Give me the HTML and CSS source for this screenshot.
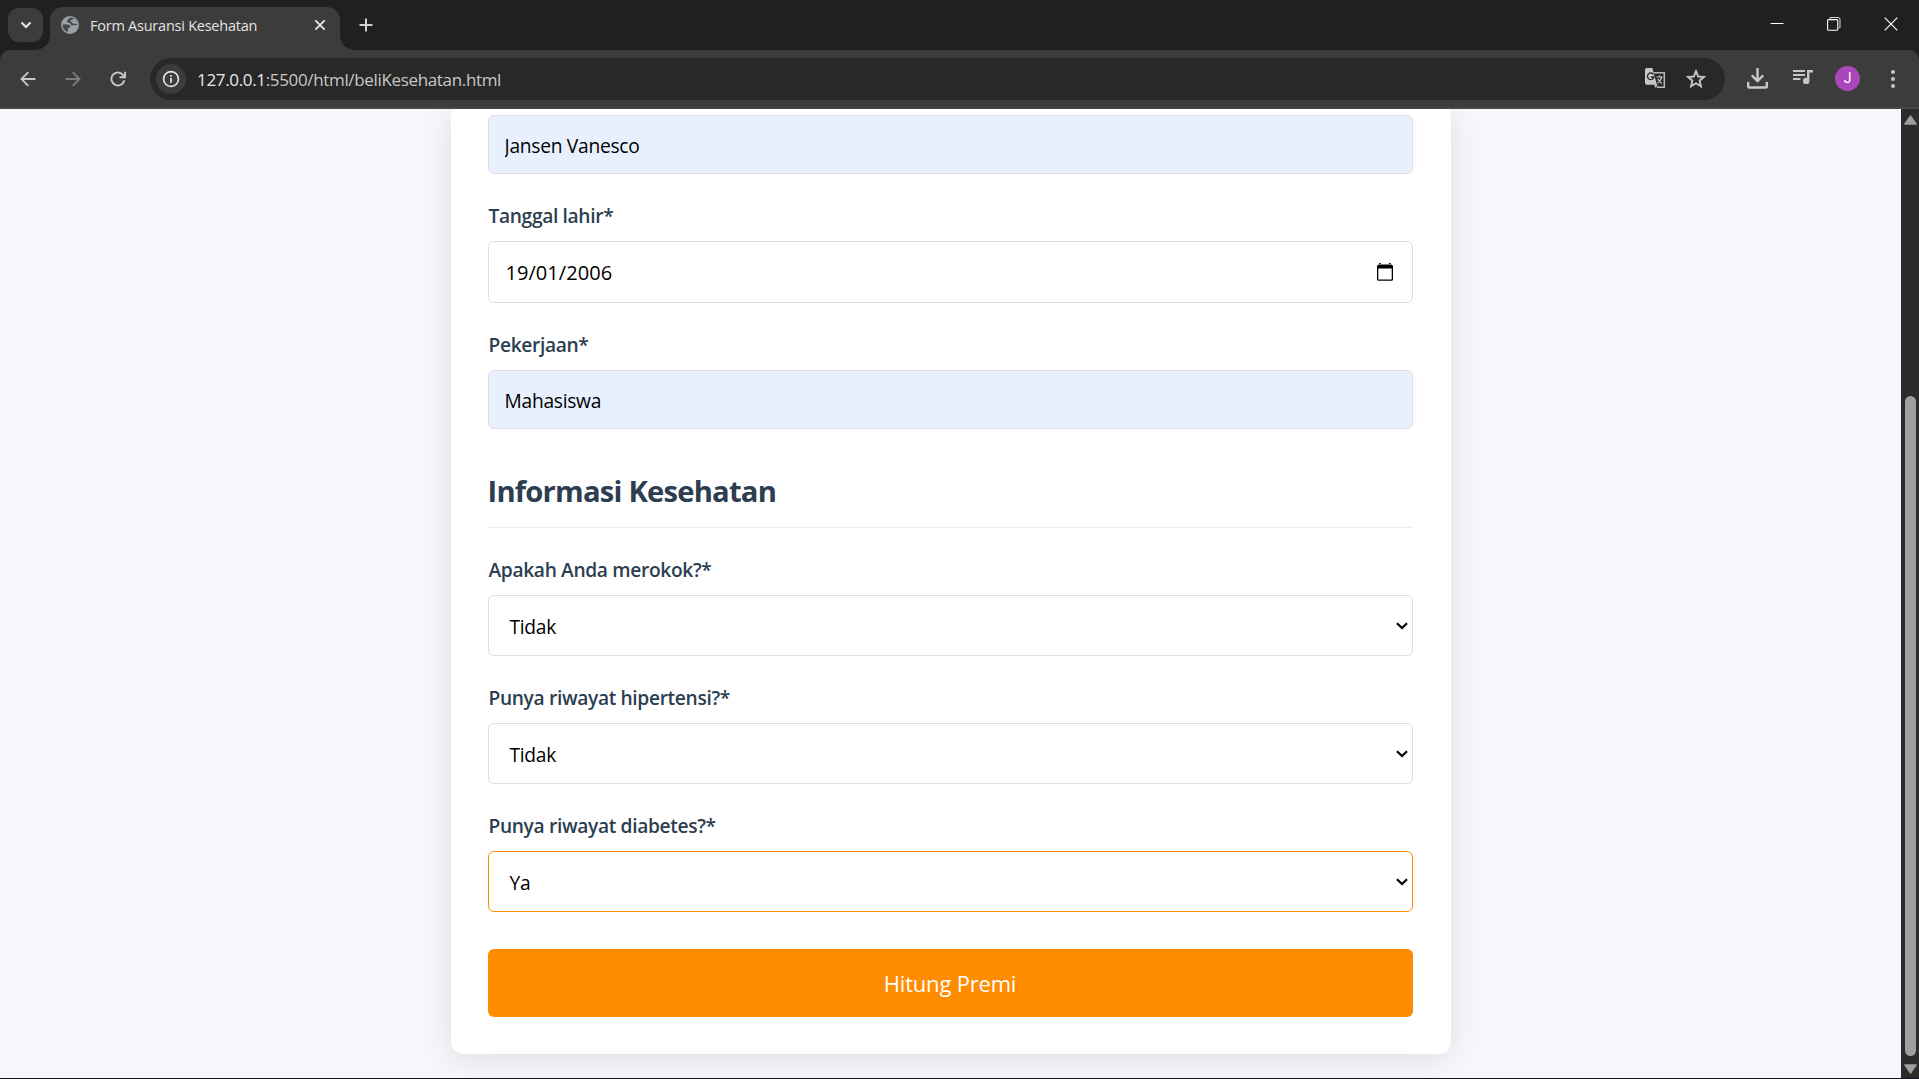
FILE: index.html
```html
<!DOCTYPE html>
<html lang="id">
<head>
<meta charset="utf-8">
<title>Form Asuransi Kesehatan</title>
<link rel="stylesheet" href="styles.css">
</head>
<body>
<div class="browser">
  <header class="tabstrip">
    <button class="tab-search" aria-label="Cari tab"><svg width="12" height="8" viewBox="0 0 12 8"><path d="M1.500 1.500 6 6l4.500-4.500" fill="none" stroke="#e3e3e3" stroke-width="2.200"/></svg></button>
    <div class="tab">
      <svg width="18" height="18" viewBox="0 0 18 18"><circle cx="9" cy="9" r="9" fill="#9aa0a6"/><path d="M10.500 1.600C8 1.800 6.200 3.800 6 5.600c.2 1.400 1.800 1 2.800 1.400 1.400.6.600 1.900 2 2.400 1.600.4 2.400-.8 4-.4l1.700.6A7.400 7.400 0 0 0 10.500 1.600ZM1.600 8.500h5.200c1.600.2 2.700 1.300 2.600 2.800-1.200.3-2.400.2-2.500 1.500v3.300A7.400 7.400 0 0 1 1.600 8.500Z" fill="#3c3c3c" fill-opacity=".9"/><path d="M12.300 2.600c-.2 1.200-1.300 1.600-2.800 1.700-.7.700-.2 1.500 1.300 1.700.5 1.500 1.400 2 2.800 1.600l2.900 1A7.400 7.400 0 0 0 12.300 2.600Z" fill="#9aa0a6"/></svg>
      <span class="tab-title">Form Asuransi Kesehatan</span>
      <svg width="12" height="12" viewBox="0 0 12 12"><path d="m1.400 1.400 9.200 9.200m0-9.200-9.200 9.200" stroke="#e3e3e3" stroke-width="1.900"/></svg>
    </div>
    <button class="new-tab" aria-label="Tab baru"><svg width="14" height="14" viewBox="0 0 14 14"><path d="M7 .5v13M.5 7h13" stroke="#d0d0d0" stroke-width="2"/></svg></button>
    <div class="window-controls">
      <svg width="14" height="14" viewBox="0 0 14 14"><path d="M.5 6.500h13" stroke="#fff" stroke-width="1"/></svg>
      <svg width="14" height="14" viewBox="0 0 14 14"><path d="M3 1.800V.5h8a2 2 0 0 1 2 2v8.200h-1.200" fill="none" stroke="#d8d8d8" stroke-width="1"/><rect x=".6" y="2.600" width="10.200" height="10.600" rx="1" fill="none" stroke="#fff" stroke-width="1.100"/></svg>
      <svg width="14" height="14" viewBox="0 0 14 14"><path d="m.7.7 12.600 12.600m0-12.600L.7 13.300" stroke="#fff" stroke-width="1.200"/></svg>
    </div>
  </header>

  <div class="toolbar-wrap">
    <nav class="toolbar">
      <div class="nav-buttons">
        <svg width="16" height="16" viewBox="0 0 16 16"><path d="M15.500 8H2M8.300 1.200 1.500 8l6.800 6.800" fill="none" stroke="#c7c7c7" stroke-width="1.900"/></svg>
        <svg width="16" height="16" viewBox="0 0 16 16"><path d="M.5 8H14M7.700 1.200 14.500 8l-6.800 6.800" fill="none" stroke="#7b7b7b" stroke-width="1.900"/></svg>
        <svg width="16" height="16" viewBox="0 0 16 16"><path d="M14.300 9.200A6.500 6.500 0 1 1 13 3.900l1.300 1.500" fill="none" stroke="#c7c7c7" stroke-width="1.900"/><path d="M9.500 6.300h5.600V.7" fill="none" stroke="#c7c7c7" stroke-width="1.900"/></svg>
      </div>
      <div class="omnibox">
        <span class="site-info"><svg width="18" height="18" viewBox="0 0 18 18"><circle cx="9" cy="9" r="7.400" fill="none" stroke="#e3e3e3" stroke-width="1.700"/><path d="M9 8v4.800M9 5v1.800" stroke="#e3e3e3" stroke-width="1.800"/></svg></span>
        <span class="url"><b>127.0.0.1</b>:5500/html/beliKesehatan.html</span>
        <svg width="21" height="21" viewBox="0 0 21 21"><path d="M9 4.800h10.300v14.500h-7.500" fill="none" stroke="#b9b9b9" stroke-width="1.500"/><path d="M1.700 0h5.700l4.500 16.700H1.700A1.700 1.700 0 0 1 0 15V1.700A1.700 1.700 0 0 1 1.700 0Z" fill="#c7c7c7"/><path d="M9 16.500h3.800L10.600 20Z" fill="#c7c7c7"/><path d="M8.500 6.400A3.300 3.300 0 1 0 9 9H5.800" fill="none" stroke="#282828" stroke-width="1.300"/><path d="M11.500 9h6.300m-3.200-1.500V9m2.100 0c-.6 2.800-2.200 4.800-4.200 6m.2-4.200c1 2 2.500 3.500 4.200 4.700" fill="none" stroke="#c7c7c7" stroke-width="1.200"/></svg>
        <svg width="20" height="20" viewBox="0 0 20 20"><path d="m10 2.200 2.200 5.300 5.700.5-4.300 3.700 1.300 5.600-4.900-3-4.900 3 1.300-5.600L2.100 8l5.700-.5Z" fill="none" stroke="#c7c7c7" stroke-width="1.900"/></svg>
      </div>
      <div class="actions">
        <svg width="21" height="21" viewBox="0 0 21 21"><path d="M10.500 0v12M4.800 7.300l5.700 5.700 5.700-5.700" fill="none" stroke="#c7c7c7" stroke-width="2.400"/><path d="M1.200 14v4.200a1.300 1.300 0 0 0 1.300 1.300h16a1.300 1.300 0 0 0 1.300-1.300V14" fill="none" stroke="#c7c7c7" stroke-width="2.400"/></svg>
        <svg width="20" height="16" viewBox="0 0 20 16"><path d="M0 2h12M0 6h12M0 10h7.500" stroke="#c7c7c7" stroke-width="2"/><path d="M14 1h6v2.400h-3.600v8.400H14Z" fill="#c7c7c7"/><circle cx="13.200" cy="11.900" r="3.200" fill="#c7c7c7"/></svg>
        <span class="avatar">J</span>
        <svg width="4" height="18" viewBox="0 0 4 18"><g fill="#c7c7c7"><circle cx="2" cy="2" r="2"/><circle cx="2" cy="9" r="2"/><circle cx="2" cy="16" r="2"/></g></svg>
      </div>
    </nav>
  </div>

  <div class="viewport">
    <main class="page">
      <form class="card">
        <input class="control autofilled" type="text" value="Jansen Vanesco" aria-label="Nama">

        <label class="label">Tanggal lahir*</label>
        <div class="control date">
          <span>19/01/2006</span>
          <svg width="16" height="18" viewBox="0 0 16 18"><path d="M2 1.500h12A2 2 0 0 1 16 3v13.300a1.500 1.500 0 0 1-1.500 1.500h-13A1.500 1.500 0 0 1 0 16.300V3a2 2 0 0 1 2-1.500ZM1.300 5.600v10.800h13.400V5.600ZM2.300 0H4v2H2.300Zm9.700 0h1.700v2H12Z" fill="#000" fill-rule="evenodd"/></svg>
        </div>

        <label class="label" for="kerja">Pekerjaan*</label>
        <input class="control autofilled" id="kerja" type="text" value="Mahasiswa">

        <h2 class="heading">Informasi Kesehatan</h2>

        <label class="label">Apakah Anda merokok?*</label>
        <div class="control select"><span>Tidak</span><svg width="12" height="8" viewBox="0 0 12 8"><path d="M1 1.200 6 6l5-4.800" fill="none" stroke="#000" stroke-width="2.200"/></svg></div>

        <label class="label">Punya riwayat hipertensi?*</label>
        <div class="control select"><span>Tidak</span><svg width="12" height="8" viewBox="0 0 12 8"><path d="M1 1.200 6 6l5-4.800" fill="none" stroke="#000" stroke-width="2.200"/></svg></div>

        <label class="label">Punya riwayat diabetes?*</label>
        <div class="control select focused"><span>Ya</span><svg width="12" height="8" viewBox="0 0 12 8"><path d="M1 1.200 6 6l5-4.800" fill="none" stroke="#000" stroke-width="2.200"/></svg></div>

        <button class="submit" type="button">Hitung Premi</button>
      </form>
    </main>
    <div class="scrollbar">
      <svg width="13" height="10" viewBox="0 0 13 10"><path d="M6.500 1.200 12 9H1Z" fill="#9f9f9f" stroke="#9f9f9f" stroke-width="1.600" stroke-linejoin="round"/></svg>
      <div class="thumb"></div>
      <svg width="13" height="10" viewBox="0 0 13 10"><path d="M6.500 8.800 12 1H1Z" fill="#9f9f9f" stroke="#9f9f9f" stroke-width="1.600" stroke-linejoin="round"/></svg>
    </div>
  </div>
</div>
</body>
</html>
```

FILE: styles.css
```css
* { box-sizing: border-box; }

body {
  margin: 0;
  font-family: "Open Sans", "Noto Sans", sans-serif;
  overflow: hidden;
}

svg { display: block; flex: none; }

button { border: 0; padding: 0; background: none; font-family: inherit; }

.browser {
  display: flex;
  flex-direction: column;
  height: 1079px;
  background: #1f2120;
  border-bottom: 1px solid #14151f;
}

/* Tab strip */
.tabstrip {
  display: flex;
  align-items: center;
  height: 50px;
  padding-left: 8px;
}

.tab-search {
  display: grid;
  place-items: center;
  width: 35px;
  height: 34px;
  border-radius: 11px;
  background: #3c3c3c;
}

.tab {
  position: relative;
  display: flex;
  align-items: center;
  align-self: flex-end;
  width: 290px;
  height: 43px;
  margin-left: 7px;
  padding: 0 14px 7px 11px;
  border-radius: 13px 13px 0 0;
  background: #3c3c3c;
}

.tab::before,
.tab::after {
  content: "";
  position: absolute;
  bottom: 0;
  width: 14px;
  height: 14px;
}

.tab::before { left: -14px; background: radial-gradient(circle at 0 0, transparent 13.5px, #3c3c3c 14px); }
.tab::after { right: -14px; background: radial-gradient(circle at 100% 0, transparent 13.5px, #3c3c3c 14px); }

.tab-title {
  flex: 1;
  padding-left: 11px;
  color: #e3e3e3;
  font-size: 14.5px;
  letter-spacing: -0.24px;
  white-space: nowrap;
}

.new-tab { margin-left: 19px; }

.window-controls {
  display: flex;
  gap: 43px;
  margin: -2px 21px 0 auto;
}

/* Toolbar */
.toolbar-wrap { flex: none; }

.toolbar {
  display: flex;
  align-items: center;
  height: 59px;
  border-radius: 10px 10px 0 0;
  border-bottom: 2px solid #474747;
  background: #3c3c3c;
}

.nav-buttons {
  display: flex;
  gap: 29px;
  width: 150px;
  padding-left: 20px;
}

.omnibox {
  display: flex;
  align-items: center;
  width: 1575px;
  height: 42px;
  padding: 0 19px 0 6px;
  border-radius: 21px;
  background: #282828;
}

.site-info {
  display: grid;
  place-items: center;
  width: 30px;
  height: 30px;
  border-radius: 50%;
  background: #3c3c3c;
}

.url {
  flex: 1;
  padding: 1px 0 0 11px;
  color: #c7c7c7;
  font-size: 17px;
  letter-spacing: -0.34px;
}

.url b { color: #e8e8e8; font-weight: 400; }

.omnibox svg + svg { margin-left: 20px; }

.actions {
  display: flex;
  align-items: center;
  padding-left: 22px;
}

.actions svg:nth-child(2) { margin: -3px 0 0 25px; }

.avatar {
  width: 25px;
  height: 25px;
  margin: 0 31px 0 22px;
  border-radius: 50%;
  background: #ab47bc;
  color: #fff;
  font-family: Roboto, sans-serif;
  font-size: 14px;
  line-height: 25px;
  text-align: center;
}

/* Page */
.viewport {
  display: flex;
  flex: 1;
  min-height: 0;
}

.page {
  display: flex;
  flex: 1;
  justify-content: center;
  overflow: hidden;
  background: #f5f7fa;
}

.card {
  display: flex;
  flex-direction: column;
  width: 1000px;
  height: 945px;
  padding: 6px 38px 0 37px;
  border-radius: 0 0 12px 12px;
  background: #fff;
  box-shadow: 0 5px 31px rgba(0, 0, 0, 0.1);
}

.control {
  display: flex;
  flex: none;
  align-items: center;
  justify-content: space-between;
  width: 100%;
  height: 61px;
  border: 1px solid #ddd;
  border-radius: 6px;
  background: #fff;
  color: #000;
  font-family: inherit;
  font-size: 19.2px;
  letter-spacing: -0.27px;
}

.autofilled {
  height: 59px;
  padding: 1px 16px 0;
  background: #e8f0fe;
}

.date {
  height: 62px;
  padding: 0 19px 0 17px;
  font-size: 20px;
  letter-spacing: 0.05px;
}

.date svg { margin-top: -1px; }

.select { padding: 0 4px 0 21px; }
.select span { padding-top: 2px; }
.focused { border-color: #ff8c00; }

.label {
  flex: none;
  height: 67px;
  padding: 28px 0 0 1px;
  color: #2c3e50;
  font-size: 19.2px;
  font-weight: 600;
  line-height: 27px;
  letter-spacing: -0.35px;
}

.heading {
  flex: none;
  height: 99px;
  margin: 0;
  padding-top: 42px;
  border-bottom: 1px solid #eee;
  color: #2c3e50;
  font-size: 29.2px;
  font-weight: 700;
  line-height: 40px;
  letter-spacing: -0.78px;
}

.submit {
  flex: none;
  height: 68px;
  margin-top: 37px;
  border-radius: 6px;
  background: #ff8c00;
  color: #fff;
  font-size: 22px;
  letter-spacing: -0.2px;
}

/* Scrollbar */
.scrollbar {
  display: flex;
  flex-direction: column;
  align-items: center;
  justify-content: space-between;
  width: 18px;
  padding: 6px 0 4px 1px;
  background: #2c2c2c;
}

.thumb {
  height: 660px;
  margin: 263px 0 0;
  width: 11px;
  border-radius: 6px;
  background: #9f9f9f;
}
```
